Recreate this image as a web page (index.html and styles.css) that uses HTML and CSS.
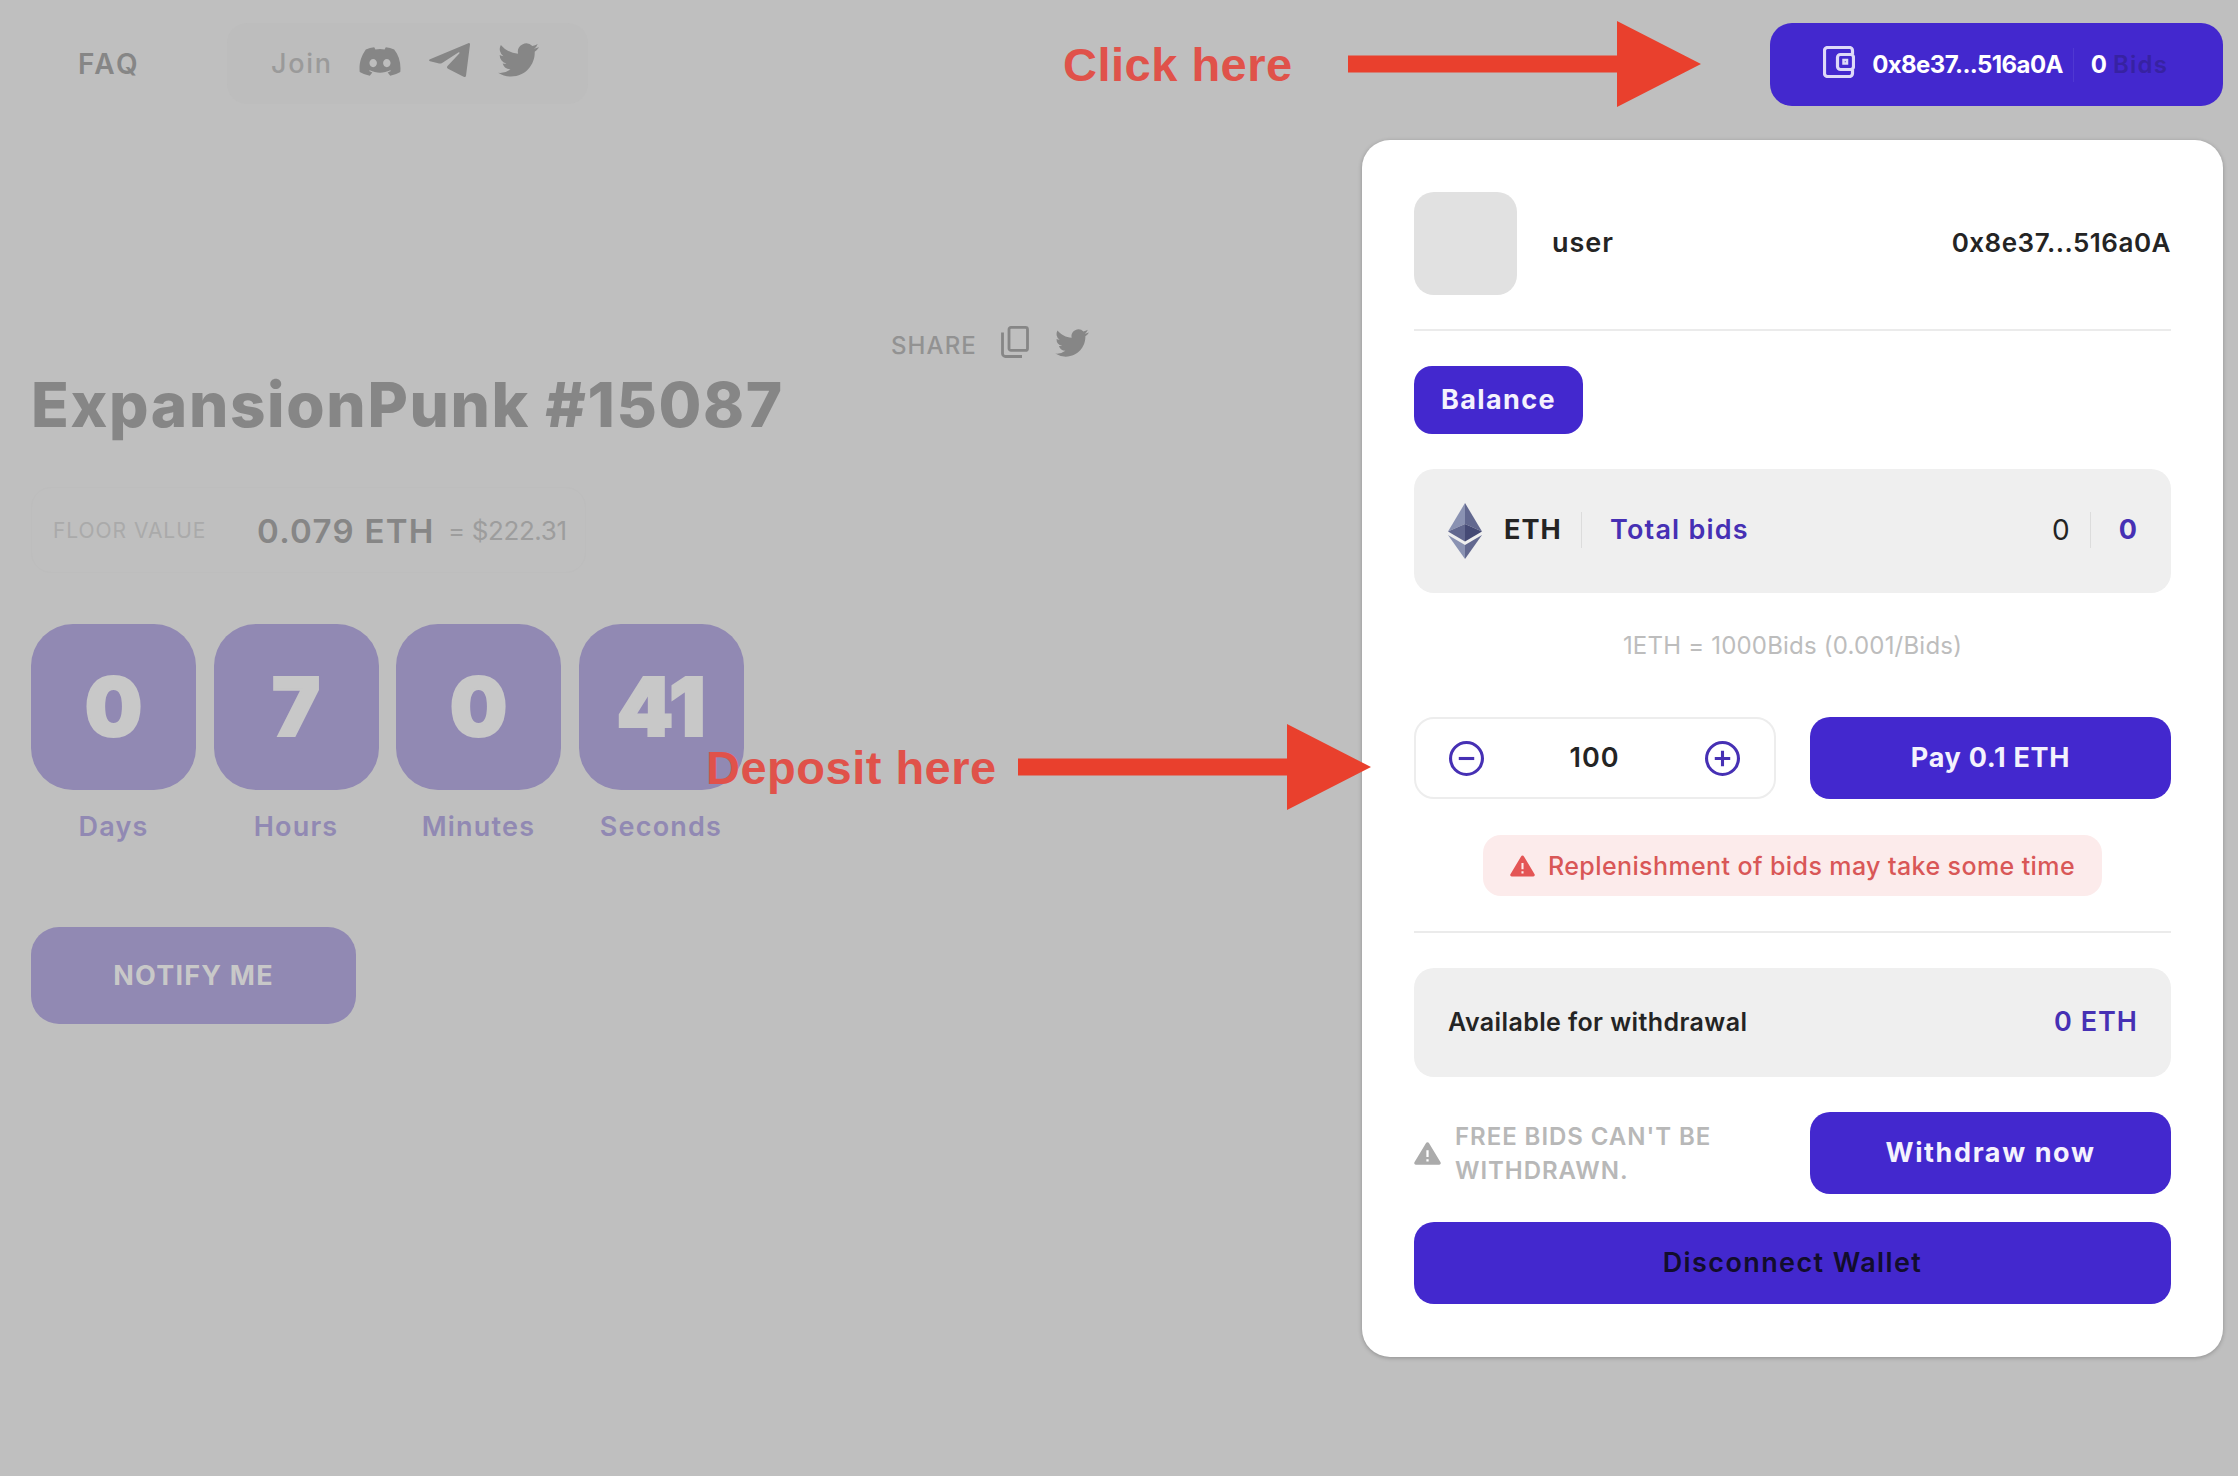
FILE: index.html
```html
<!DOCTYPE html>
<html lang="en">
<head>
<meta charset="utf-8">
<title>ExpansionPunk #15087</title>
<link rel="stylesheet" href="styles.css">
</head>
<body>
<svg class="defs" width="0" height="0" aria-hidden="true">
  <symbol id="twitter" viewBox="0 2 24 20"><path d="M23.95 4.57a10 10 0 0 1-2.82.77 4.96 4.96 0 0 0 2.16-2.72 9.9 9.9 0 0 1-3.12 1.18 4.92 4.92 0 0 0-8.39 4.48C7.69 8.1 4.07 6.13 1.64 3.16a4.92 4.92 0 0 0 1.52 6.57 4.9 4.9 0 0 1-2.23-.61v.06a4.92 4.92 0 0 0 3.95 4.83 5 5 0 0 1-2.21.08 4.94 4.94 0 0 0 4.6 3.42A9.87 9.87 0 0 1 0 19.54a13.99 13.99 0 0 0 7.55 2.21c9.05 0 14-7.5 14-13.98 0-.21 0-.42-.02-.63a9.94 9.94 0 0 0 2.46-2.55z"/></symbol>
  <symbol id="warning" viewBox="0 0 24 20"><path fill-rule="evenodd" d="M10.6.8a1.6 1.6 0 0 1 2.8 0l10.2 17A1.5 1.5 0 0 1 22.3 20H1.7a1.5 1.5 0 0 1-1.3-2.2zM11 7v6h2V7zm0 8v2.2h2V15z"/></symbol>
</svg>

<header class="topbar">
  <a class="faq">FAQ</a>
  <div class="join">
    <span class="join-label">Join</span>
    <svg class="discord" viewBox="0 3.5 24 17"><path fill-rule="evenodd" d="M20.3 4.9A19.8 19.8 0 0 0 15.4 3.6l-.7 1.3a18.3 18.3 0 0 0-5.4 0L8.6 3.6A19.7 19.7 0 0 0 3.7 4.9C.5 9.5-.3 13.6.1 18.1a19.9 19.9 0 0 0 5.9 2.3L7.5 18.5 5.6 17.6 6 17.2c3.9 1.8 8.2 1.8 12 0l.4.4-1.9.9 1.5 1.9a19.8 19.8 0 0 0 5.9-2.3c.5-5.2-.8-9.7-3.6-13.2zM8 15.3c-1.2 0-2.2-1.1-2.2-2.4S6.8 10.5 8 10.5s2.2 1.1 2.2 2.4-1 2.4-2.2 2.4zm8 0c-1.2 0-2.2-1.1-2.2-2.4s1-2.4 2.2-2.4 2.2 1.1 2.2 2.4-1 2.4-2.2 2.4z"/></svg>
    <svg class="telegram" viewBox="0 0 41 34"><path d="M39.3.2c1-.5 1.800.1 1.700 1.300l-4 31.200c-.2 1.400-1.200 1.700-2.400 1.100L19 25.700c-1.300-.8-1.300-1.700-.5-2.700L30.300 10.500c.7-.9 0-1.600-1-1L13.500 19.700c-1.500.9-2.800 1-4.300.6L1 18.300c-1.300-.5-1.300-1.400 0-2z"/></svg>
    <svg class="bird"><use href="#twitter"/></svg>
  </div>
  <button class="wallet">
    <svg class="wallet-icon" viewBox="0 0 32 32"><g fill="none" stroke="currentColor" stroke-width="3.200"><path d="M29.500 8.500V4.500a3 3 0 0 0-3-3h-22a3 3 0 0 0-3 3v23a3 3 0 0 0 3 3h22a3 3 0 0 0 3-3v-4"/><rect x="14.500" y="8.500" width="16" height="15" rx="3"/><rect x="20.500" y="14" width="3.500" height="3.500" stroke-width="2.500"/></g></svg>
    <span class="wallet-address">0x8e37...516a0A</span>
    <span class="wallet-divider"></span>
    <span class="wallet-count">0</span>
    <span class="wallet-unit">Bids</span>
  </button>
</header>

<main class="lot">
  <div class="share">
    <span class="share-label">SHARE</span>
    <svg class="copy" viewBox="0 0 28 32"><g fill="none" stroke="currentColor" stroke-width="2.800"><rect x="8" y="1.400" width="18.500" height="23" rx="2"/><path d="M1.500 6.500v21a3 3 0 0 0 3 3h16.500"/></g></svg>
    <svg class="share-bird"><use href="#twitter"/></svg>
  </div>
  <h1 class="title">ExpansionPunk #15087</h1>
  <div class="floor">
    <span class="floor-label">FLOOR VALUE</span>
    <span class="floor-eth">0.079 ETH</span>
    <span class="floor-usd">= $222.31</span>
  </div>
  <div class="timer">
    <div class="unit"><div class="tile">0</div><div class="unit-label">Days</div></div>
    <div class="unit"><div class="tile">7</div><div class="unit-label">Hours</div></div>
    <div class="unit"><div class="tile">0</div><div class="unit-label">Minutes</div></div>
    <div class="unit"><div class="tile">41</div><div class="unit-label">Seconds</div></div>
  </div>
  <button class="notify">NOTIFY ME</button>
</main>

<aside class="panel">
  <div class="user">
    <div class="avatar"></div>
    <span class="user-name">user</span>
    <span class="user-address">0x8e37...516a0A</span>
  </div>
  <div class="rule rule-top"></div>
  <div class="tab">Balance</div>
  <div class="balance">
    <svg class="eth" viewBox="0 0 34 56"><path fill="#8a92b2" d="M17 0 0 28.500 17 21z"/><path fill="#62688f" d="M17 0v21l17 7.500z"/><path fill="#62688f" d="M0 28.500 17 21v17.500z"/><path fill="#454a75" d="M17 21v17.500l17-10z"/><path fill="#8a92b2" d="M0 32l17 10v14z"/><path fill="#62688f" d="M34 32 17 42v14z"/></svg>
    <span class="coin">ETH</span>
    <span class="sep"></span>
    <span class="total">Total bids</span>
    <span class="coin-amount">0</span>
    <span class="sep"></span>
    <span class="bid-amount">0</span>
  </div>
  <p class="rate">1ETH = 1000Bids (0.001/Bids)</p>
  <div class="pay-row">
    <div class="stepper">
      <svg class="step" viewBox="0 0 34 34"><circle cx="17" cy="17" r="15.500"/><path d="M9.500 17h15"/></svg>
      <span class="quantity">100</span>
      <svg class="step" viewBox="0 0 34 34"><circle cx="17" cy="17" r="15.500"/><path d="M9.500 17h15M17 9.500v15"/></svg>
    </div>
    <button class="action pay">Pay 0.1 ETH</button>
  </div>
  <div class="alert"><svg class="alert-icon"><use href="#warning"/></svg><span class="alert-text">Replenishment of bids may take some time</span></div>
  <div class="rule rule-bottom"></div>
  <div class="available"><span class="available-label">Available for withdrawal</span><span class="available-amount">0 ETH</span></div>
  <div class="withdraw-row">
    <svg class="note-icon"><use href="#warning"/></svg>
    <p class="note">FREE BIDS CAN'T BE<br>WITHDRAWN.</p>
    <button class="action withdraw">Withdraw now</button>
  </div>
  <button class="action disconnect">Disconnect Wallet</button>
</aside>

<div class="hint hint-click">
  <span class="hint-text">Click here</span>
  <svg class="arrow arrow-click" viewBox="0 0 353 86"><path d="M0 34.500h269V0l84 43-84 43V51.500H0z"/></svg>
</div>
<div class="hint hint-deposit">
  <span class="hint-text">Deposit here</span>
  <svg class="arrow arrow-deposit" viewBox="0 0 353 86"><path d="M0 34.500h269V0l84 43-84 43V51.500H0z"/></svg>
</div>
</body>
</html>
```
FILE: styles.css
```css
* { box-sizing: border-box; margin: 0; padding: 0; }

body {
  position: relative;
  width: 2238px;
  height: 1476px;
  overflow: hidden;
  background: #bfbfbf;
  color: #242424;
  font: 600 27px/34px Inter, "Noto Sans", sans-serif;
  letter-spacing: 1.2px;
  white-space: nowrap;
}

svg { flex: none; fill: currentColor; }
button { border: 0; font: inherit; letter-spacing: inherit; }
.defs { position: absolute; }

/* Header */
.topbar {
  display: flex;
  align-items: flex-start;
  height: 106px;
  padding: 23px 15px 0 78px;
  color: #868686;
}
.faq { width: 149px; font-size: 28px; line-height: 82px; letter-spacing: 2.4px; }
.join {
  display: flex;
  width: 361px;
  height: 81px;
  padding: 20px 0 0 44px;
  border-radius: 20px;
  background: #bdbdbd;
}
.join-label { width: 88px; color: #9a9a9a; font-weight: 500; line-height: 42px; letter-spacing: 1.7px; }
.discord { width: 42px; height: 29px; margin: 4px 28px 0 0; }
.telegram { width: 41px; height: 34px; margin-right: 28px; }
.bird { width: 41px; height: 34px; }
.wallet {
  display: flex;
  align-items: center;
  width: 453px;
  height: 83px;
  margin-left: auto;
  padding-left: 53px;
  border-radius: 22px;
  background: #4328ce;
  color: #fff;
  font-size: 24px;
  font-weight: 700;
  letter-spacing: -0.6px;
}
.wallet-icon { width: 32px; height: 32px; margin: -5px 13px 0 0; color: #ded9f8; }
.wallet-address { width: 211px; margin-left: -6px; }
.wallet-divider { width: 1px; height: 34px; margin-right: 12px; background: #5038d2; }
.wallet-count { width: 25px; }
.wallet-unit { margin-left: 2px; color: #3722a2; font-weight: 600; letter-spacing: 1.2px; }

/* Lot */
.lot { width: 1120px; padding: 220px 31px 0; color: #868686; }
.share { display: flex; height: 34px; padding-left: 860px; }
.share-label { width: 111px; color: #929292; font-size: 24px; font-weight: 500; line-height: 39px; letter-spacing: 1.1px; }
.copy { width: 28px; height: 32px; margin-right: 26px; }
.share-bird { width: 34px; height: 28px; margin-top: 3px; }
.title { margin-top: 5px; font-size: 62px; font-weight: 800; line-height: 80px; letter-spacing: 1.65px; }
.floor {
  display: flex;
  align-items: center;
  width: 555px;
  height: 86px;
  margin-top: 42px;
  padding: 1px 0 0 21px;
  border: 1px solid #bdbdbd;
  border-radius: 20px;
}
.floor-label { width: 204px; color: #aaa; font-size: 21px; font-weight: 400; letter-spacing: 0.95px; }
.floor-eth { width: 191px; font-size: 33px; letter-spacing: 1.3px; }
.floor-usd { color: #9d9d9d; font-size: 26px; font-weight: 400; letter-spacing: -0.4px; }
.timer { display: flex; gap: 17.5px; margin-top: 51px; }
.unit { width: 165px; color: #9189b3; text-align: center; }
.tile {
  height: 166px;
  border-radius: 42px;
  background: #9189b3;
  color: #c8c8c8;
  font-size: 81px;
  font-weight: 900;
  line-height: 166px;
  letter-spacing: 0;
  -webkit-text-stroke: 2px #c8c8c8;
}
.unit-label { margin-top: 20px; }
.notify {
  width: 325px;
  height: 97px;
  margin-top: 83px;
  border-radius: 28px;
  background: #9189b3;
  color: #c8c8c8;
  font-weight: 700;
}

/* Wallet dropdown */
.panel {
  position: absolute;
  top: 140px;
  left: 1362px;
  width: 861px;
  height: 1217px;
  padding: 52px 52px;
  border-radius: 28px;
  background: #fff;
  box-shadow: 0 1px 4px rgba(0, 0, 0, 0.25);
}
.user { display: flex; align-items: center; height: 103px; }
.avatar { width: 103px; height: 103px; margin-right: 35px; border-radius: 20px; background: #e1e1e1; }
.user-name { margin-top: -2px; letter-spacing: 1px; }
.user-address { margin: -2px 0 0 auto; font-size: 26px; letter-spacing: 0.5px; }
.rule { height: 2px; background: #ebebeb; }
.rule-top { margin-top: 34px; }
.tab {
  width: 169px;
  height: 68px;
  margin-top: 35px;
  border-radius: 18px;
  background: #4328ce;
  color: #f4f2fd;
  font-weight: 700;
  line-height: 67px;
  letter-spacing: 1.4px;
  text-align: center;
}
.balance {
  display: flex;
  align-items: center;
  height: 124px;
  margin-top: 35px;
  padding: 0 34px 2px 34px;
  border-radius: 20px;
  background: #efefef;
}
.eth { width: 34px; height: 56px; margin: 1px 22px 0 0; }
.coin { width: 77px; font-weight: 700; letter-spacing: 1px; }
.sep { width: 1px; height: 36px; background: #dcdcdc; }
.total { margin-left: 28px; color: #4630b4; }
.coin-amount { margin: 0 19px 0 auto; font-size: 28px; font-weight: 400; }
.bid-amount { margin-left: 28px; color: #4630b4; font-weight: 700; letter-spacing: 0; }
.rate { margin-top: 36px; color: #bdbdbd; font-size: 24px; font-weight: 400; letter-spacing: 0.2px; text-align: center; }
.pay-row { display: flex; justify-content: space-between; margin-top: 54px; }
.stepper {
  display: flex;
  align-items: center;
  justify-content: space-between;
  width: 362px;
  height: 82px;
  padding: 0 34px 0 33px;
  border: 2px solid #ededed;
  border-radius: 20px;
}
.step { width: 35px; height: 35px; fill: none; stroke: #4630b4; stroke-width: 3px; }
.quantity { letter-spacing: 1px; }
.action { width: 361px; height: 82px; padding-bottom: 1px; border-radius: 20px; background: #4328ce; color: #f4f2fd; font-weight: 700; }
.pay { letter-spacing: 0.7px; }
.alert {
  display: flex;
  align-items: center;
  width: 619px;
  height: 61px;
  margin: 36px auto 0;
  padding-left: 27px;
  border-radius: 18px;
  background: #fcebeb;
  color: #d95757;
  font-size: 25px;
  font-weight: 500;
  letter-spacing: 0.4px;
}
.alert-icon { width: 25px; height: 22px; margin-right: 13px; color: #e45555; }
.rule-bottom { margin-top: 35px; }
.available {
  display: flex;
  align-items: center;
  justify-content: space-between;
  height: 109px;
  margin-top: 35px;
  padding: 0 33px 1px 34px;
  border-radius: 20px;
  background: #efefef;
}
.available-label { font-size: 25px; letter-spacing: 0.4px; }
.available-amount { color: #4630b4; letter-spacing: 1px; }
.withdraw-row { display: flex; align-items: center; margin-top: 35px; }
.note-icon { width: 27px; height: 25px; margin-right: 14px; color: #ababab; }
.note { padding-top: 1px; color: #b8b8b8; font-size: 24px; letter-spacing: 0.95px; }
.withdraw { margin-left: auto; letter-spacing: 1.6px; }
.disconnect { display: block; width: 757px; margin-top: 28px; color: #120d2c; font-weight: 600; letter-spacing: 1.4px; }

/* Pointers laid over the screen */
.hint { position: absolute; display: flex; align-items: center; color: #e9402d; }
.hint-click { top: 21px; left: 1063px; }
.hint-deposit { top: 724px; left: 706px; }
.hint-text { padding-top: 2px; color: #e0524a; font: 700 47px/54px "Liberation Sans", sans-serif; letter-spacing: 0.5px; }
.arrow { width: 353px; height: 86px; }
.arrow-click { margin-left: 55px; }
.arrow-deposit { margin-left: 21px; }
```
